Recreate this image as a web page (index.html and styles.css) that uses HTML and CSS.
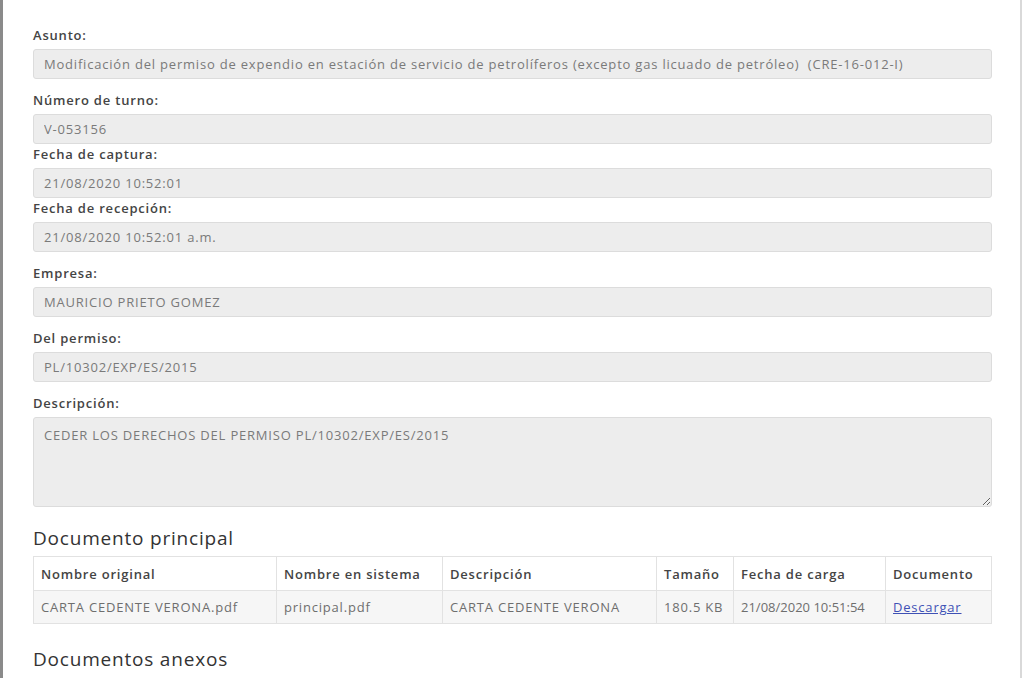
FILE: index.html
```html
<!DOCTYPE html>
<html lang="es">
<head>
    <meta charset="UTF-8">
    <meta name="viewport" content="width=device-width, initial-scale=1.0">
    <title>Detalle de trámite</title>
    <link rel="stylesheet" href="styles.css">
</head>
<body>
    <div class="panel">
        <div class="field">
            <label class="field-label">Asunto:</label>
            <input class="field-input" type="text" value="Modificación del permiso de expendio en estación de servicio de petrolíferos (excepto gas licuado de petróleo)  (CRE-16-012-I)" disabled>
        </div>
        <div class="field tight">
            <label class="field-label">Número de turno:</label>
            <input class="field-input" type="text" value="V-053156" disabled>
        </div>
        <div class="field tight">
            <label class="field-label">Fecha de captura:</label>
            <input class="field-input" type="text" value="21/08/2020 10:52:01" disabled>
        </div>
        <div class="field">
            <label class="field-label">Fecha de recepción:</label>
            <input class="field-input" type="text" value="21/08/2020 10:52:01 a.m." disabled>
        </div>
        <div class="field">
            <label class="field-label">Empresa:</label>
            <input class="field-input" type="text" value="MAURICIO PRIETO GOMEZ" disabled>
        </div>
        <div class="field">
            <label class="field-label">Del permiso:</label>
            <input class="field-input" type="text" value="PL/10302/EXP/ES/2015" disabled>
        </div>
        <div class="field">
            <label class="field-label">Descripción:</label>
            <textarea class="field-input field-area" disabled>CEDER LOS DERECHOS DEL PERMISO PL/10302/EXP/ES/2015</textarea>
        </div>

        <h3 class="section-title">Documento principal</h3>
        <table class="doc-table">
            <thead>
                <tr>
                    <th class="col-orig">Nombre original</th>
                    <th class="col-sys">Nombre en sistema</th>
                    <th class="col-desc">Descripción</th>
                    <th class="col-size">Tamaño</th>
                    <th class="col-date">Fecha de carga</th>
                    <th>Documento</th>
                </tr>
            </thead>
            <tbody>
                <tr>
                    <td>CARTA CEDENTE VERONA.pdf</td>
                    <td>principal.pdf</td>
                    <td>CARTA CEDENTE VERONA</td>
                    <td>180.5 KB</td>
                    <td class="date-cell">21/08/2020 10:51:54</td>
                    <td><a href="#">Descargar</a></td>
                </tr>
            </tbody>
        </table>

        <h3 class="section-title annex">Documentos anexos</h3>
    </div>
</body>
</html>
```

FILE: styles.css
```css
body {
    margin: 0;
    padding: 0;
    background-color: #fff;
    font-family: "Open Sans", Arial, sans-serif;
    letter-spacing: 0.8px;
    overflow: hidden;
}
.panel {
    height: 678px;
    box-sizing: border-box;
    margin-right: 2px;
    padding: 26px 28px 0 30px;
    border-left: 3px solid #8a8a8a;
    border-right: 2px solid #d9d9d9;
    background-color: #fff;
}
.field {
    display: flex;
    flex-direction: column;
    margin-bottom: 12px;
}
.field.tight {
    margin-bottom: 1px;
}
.field-label {
    font-size: 13px;
    line-height: 18px;
    font-weight: 600;
    color: #444;
    margin-bottom: 5px;
}
.field-input {
    height: 30px;
    box-sizing: border-box;
    padding: 0 10px;
    font-family: inherit;
    font-size: 13px;
    letter-spacing: 0.8px;
    color: #7a7a7a;
    background-color: #ededed;
    border: 1px solid #dcdcdc;
    border-radius: 3px;
    -webkit-text-fill-color: #7a7a7a;
    opacity: 1;
}
.field-area {
    height: 90px;
    padding: 8px 10px;
    resize: vertical;
    line-height: 18px;
}
.section-title {
    margin: 19px 0 6px 0;
    font-size: 19px;
    line-height: 24px;
    font-weight: 500;
    color: #333;
}
.section-title.annex {
    margin-top: 23px;
}
.doc-table {
    width: 100%;
    border-collapse: collapse;
    font-size: 13px;
}
.doc-table th,
.doc-table td {
    border: 1px solid #e2e2e2;
    padding: 0 7px;
    text-align: left;
}
.doc-table th {
    height: 33px;
    font-weight: 600;
    color: #444;
    background-color: #fff;
}
.doc-table td {
    height: 32px;
    color: #6e6e6e;
    background-color: #f6f6f6;
}
.doc-table .date-cell {
    letter-spacing: 0;
}
.col-orig { width: 228px; }
.col-sys { width: 151px; }
.col-desc { width: 199px; }
.col-size { width: 62px; }
.col-date { width: 137px; }
.doc-table a {
    color: #3f51b5;
}
```
